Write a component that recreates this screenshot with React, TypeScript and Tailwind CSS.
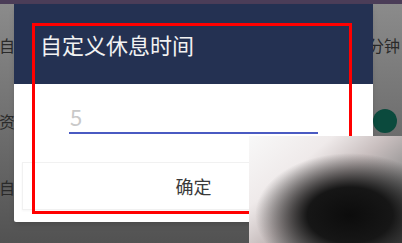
import React from 'react';

const cjk = { fontFamily: '"Noto Sans CJK SC", "Noto Sans", sans-serif' };

export default function App() {
  return (
    <div
      className="relative w-[402px] h-[243px] overflow-hidden bg-gradient-to-b from-[#8c8c8c] via-[#707070] to-[#525252]"
      style={cjk}
    >
      {/* dimmed settings page behind the dialog */}
      <div className="h-[4px] bg-[#4b3d58]" />
      <div className="flex flex-col text-[16px] text-[#2a2a2a]">
        <div className="h-[82px] flex items-center justify-between">
          <span className="-ml-[1px]">自定</span>
          <span className="mr-[2px]">分钟</span>
        </div>
        <div className="h-[70px] flex items-center justify-between">
          <span className="-ml-[1px]">资讯</span>
          <div className="mr-[5px] w-[24px] h-[24px] rounded-full bg-[#0b4a3d]" />
        </div>
        <div className="h-[62px] flex items-center">
          <span className="-ml-[1px]">自动</span>
        </div>
      </div>

      {/* dialog */}
      <div className="absolute left-[14px] top-[4px] w-[359px] h-[218px] flex flex-col bg-white rounded-[2px] shadow-md">
        <div className="h-[80px] bg-[#243152] pl-[26px] pt-[25px]">
          <div className="text-[22px] leading-[30px] text-[#f2f2f2]">自定义休息时间</div>
        </div>
        <div className="px-[55px] pt-[17px]">
          <div className="text-[22px] leading-[30px] text-[#c9c9c9] pl-[1px]">5</div>
          <div className="mt-[1px] h-[2px] bg-[#4a5ac2]" />
        </div>
        <div className="mx-[8px] mt-[28px] h-[48px] flex items-center justify-center border border-[#f1f1f1] shadow-[0_1px_2px_rgba(0,0,0,0.04)]">
          <span className="text-[18px] text-[#3a3a3a]">确定</span>
        </div>
      </div>

      {/* annotation frame */}
      <div className="absolute left-[32px] top-[23px] w-[320px] h-[191px] border-[3px] border-[#ff0000]" />

      {/* blurred watermark */}
      <div className="absolute left-[249px] top-[136px] w-[153px] h-[107px] bg-[radial-gradient(ellipse_62%_58%_at_66%_74%,#0c0c0c_0%,#161616_45%,rgba(40,40,40,0)_100%),linear-gradient(140deg,#f8f8f8_0%,#efeaea_30%,#c8bebe_50%,#8a8a8a_75%,#5a5a5a_100%)]" />
    </div>
  );
}
